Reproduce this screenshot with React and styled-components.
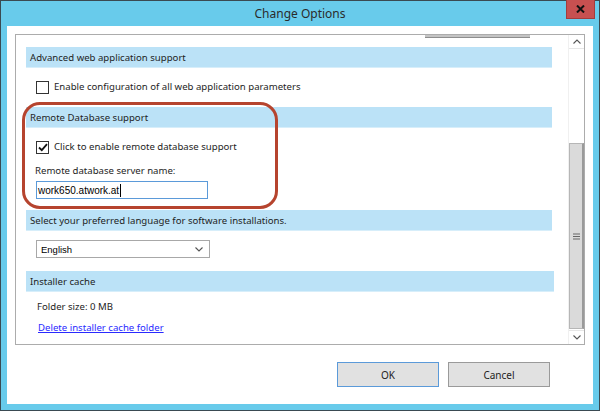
import React from 'react'
import styled, { createGlobalStyle } from 'styled-components'

const Global = createGlobalStyle`
  html, body { margin: 0; padding: 0; background: #fff; }
  body { font-family: "Noto Sans", "Open Sans", sans-serif; }
`

const Window = styled.div`
  width: 600px;
  height: 411px;
  box-sizing: border-box;
  border: 1px solid #3a4a52;
  background: #68cbeb;
  display: flex;
  flex-direction: column;
`

const TitleBar = styled.div`
  height: 25px;
  display: grid;
  grid-template-columns: 1fr auto 1fr;
  align-items: start;
  flex-shrink: 0;
`

const Title = styled.div`
  grid-column: 2;
  font-size: 12px;
  color: #2b2b2b;
  line-height: 25px;
`

const CloseButton = styled.div`
  grid-column: 3;
  justify-self: end;
  margin-top: -1px;
  margin-right: 4px;
  width: 29px;
  height: 19px;
  background: #c75050;
  border: 1px solid #a33c3c;
  border-top: none;
  box-sizing: border-box;
  display: flex;
  align-items: center;
  justify-content: center;
`

const Client = styled.div`
  flex: 1;
  margin: 0 6px 6px;
  background: #fff;
  padding: 8px 8px 0;
  display: flex;
  flex-direction: column;
`

const Panel = styled.div`
  height: 311px;
  box-sizing: border-box;
  border: 1px solid #acacac;
  display: flex;
  position: relative;
`

const Content = styled.div`
  flex: 1;
  padding: 0 16px 0 10px;
  display: flex;
  flex-direction: column;
  font-size: 9.6px;
  color: #1e1e1e;
`

const TopStub = styled.div`
  margin-left: 399px;
  width: 105px;
  height: 3px;
  background: #c4c4c4;
  border-bottom: 1px solid #8e8e8e;
  box-sizing: border-box;
`

const Band = styled.div`
  margin-top: ${p => p.$mt}px;
  height: 21px;
  background: #bbe2f7;
  border-bottom: 1px solid #d7eefa;
  box-sizing: border-box;
  padding-left: 4px;
  line-height: 21px;
  margin-right: ${p => p.$mr || 0}px;
`

const Row = styled.div`
  margin-top: ${p => p.$mt}px;
  padding-left: ${p => p.$pl ?? 10}px;
  height: 16px;
  line-height: 16px;
  display: flex;
  align-items: center;
  gap: 5px;
`

const Box = styled.span`
  width: 13px;
  height: 13px;
  box-sizing: border-box;
  border: 1px solid #333;
  background: #fff;
  display: inline-flex;
  align-items: center;
  justify-content: center;
`

const Field = styled.div`
  margin-top: ${p => p.$mt}px;
  margin-left: 10px;
  width: ${p => p.$w}px;
  height: 18px;
  box-sizing: border-box;
  border: 1px solid ${p => p.$border};
  font-family: "Liberation Sans", Arial, sans-serif;
  font-size: ${p => p.$fs}px;
  color: #000;
  display: flex;
  align-items: center;
  justify-content: space-between;
  padding: 0 6px 0 ${p => p.$pl}px;
  background: #fff;
`

const Caret = styled.span`
  width: 1px;
  height: 13px;
  background: #000;
  margin-left: 1px;
`

const Link = styled.a`
  color: #2a2aff;
  text-decoration: underline;
  cursor: pointer;
`

const Scrollbar = styled.div`
  width: 15px;
  display: flex;
  flex-direction: column;
  background: #fff;
  border-left: 1px solid #f0f0f0;
`

const Arrow = styled.div`
  height: 14px;
  display: flex;
  align-items: center;
  justify-content: center;
  border-bottom: ${p => (p.$up ? '1px solid #e6e6e6' : 'none')};
  border-top: ${p => (p.$up ? 'none' : '1px solid #e6e6e6')};
  box-sizing: border-box;
`

const Track = styled.div`
  flex: 1;
  display: flex;
  flex-direction: column;
  padding: 94px 0 1px;
`

const Thumb = styled.div`
  flex: 1;
  background: #dadada;
  border: 1px solid #b6b6b6;
  border-right: 2px solid #9a9a9a;
  box-sizing: border-box;
  display: flex;
  align-items: center;
  justify-content: center;
`

const Highlight = styled.div`
  position: absolute;
  left: 6px;
  top: 67px;
  width: 256px;
  height: 107px;
  border: 3px solid #b6442e;
  border-radius: 18px;
  box-sizing: border-box;
  pointer-events: none;
`

const Buttons = styled.div`
  margin-top: 17px;
  margin-right: 35px;
  display: flex;
  justify-content: flex-end;
  gap: 9px;
`

const Button = styled.div`
  width: 102px;
  height: 25px;
  box-sizing: border-box;
  background: #e1e1e1;
  border: 1px solid ${p => (p.$default ? '#5b9ad9' : '#9a9a9a')};
  font-size: 10px;
  color: #1e1e1e;
  display: flex;
  align-items: center;
  justify-content: center;
`

const Check = () => (
  <svg width="10" height="9" viewBox="0 0 10 9">
    <path d="M1 4.5 L3.8 7.2 L9 1.2" fill="none" stroke="#111" strokeWidth="1.8" />
  </svg>
)

const Chevron = ({ up }) => (
  <svg width="8" height="5" viewBox="0 0 8 5">
    <path d={up ? 'M0.5 4.5 L4 1 L7.5 4.5' : 'M0.5 0.5 L4 4 L7.5 0.5'} fill="none" stroke="#555" strokeWidth="1.1" />
  </svg>
)

const Grip = () => (
  <svg width="7" height="7" viewBox="0 0 7 7">
    <path d="M0 1 H7 M0 3.5 H7 M0 6 H7" stroke="#666" strokeWidth="1" />
  </svg>
)

export default function App() {
  return (
    <>
      <Global />
      <Window>
        <TitleBar>
          <Title>Change Options</Title>
          <CloseButton>
            <svg width="9" height="8" viewBox="0 0 9 8">
              <path d="M1 0.5 L8 7.5 M8 0.5 L1 7.5" stroke="#111" strokeWidth="2" />
            </svg>
          </CloseButton>
        </TitleBar>
        <Client>
          <Panel>
            <Content>
              <TopStub />
              <Band $mt={9}>Advanced web application support</Band>
              <Row $mt={11}>
                <Box />
                <span>Enable configuration of all web application parameters</span>
              </Row>
              <Band $mt={12}>Remote Database support</Band>
              <Row $mt={11}>
                <Box><Check /></Box>
                <span>Click to enable remote database support</span>
              </Row>
              <Row $mt={8} $pl={9}>Remote database server name:</Row>
              <Field $mt={2} $w={172} $border="#5b9ad9" $pl={1} $fs={10}>
                <span style={{ display: 'flex', alignItems: 'center' }}>
                  work650.atwork.at<Caret />
                </span>
              </Field>
              <Band $mt={11}>Select your preferred language for software installations.</Band>
              <Field $mt={9} $w={174} $border="#a8a8a8" $pl={4} $fs={9.5}>
                <span>English</span>
                <Chevron />
              </Field>
              <Band $mt={13} $mr={-2}>Installer cache</Band>
              <Row $mt={7} $pl={11}>Folder size: 0 MB</Row>
              <Row $mt={5} $pl={12}><Link>Delete installer cache folder</Link></Row>
            </Content>
            <Scrollbar>
              <Arrow $up><Chevron up /></Arrow>
              <Track>
                <Thumb><Grip /></Thumb>
              </Track>
              <Arrow><Chevron /></Arrow>
            </Scrollbar>
            <Highlight />
          </Panel>
          <Buttons>
            <Button $default>OK</Button>
            <Button>Cancel</Button>
          </Buttons>
        </Client>
      </Window>
    </>
  )
}
